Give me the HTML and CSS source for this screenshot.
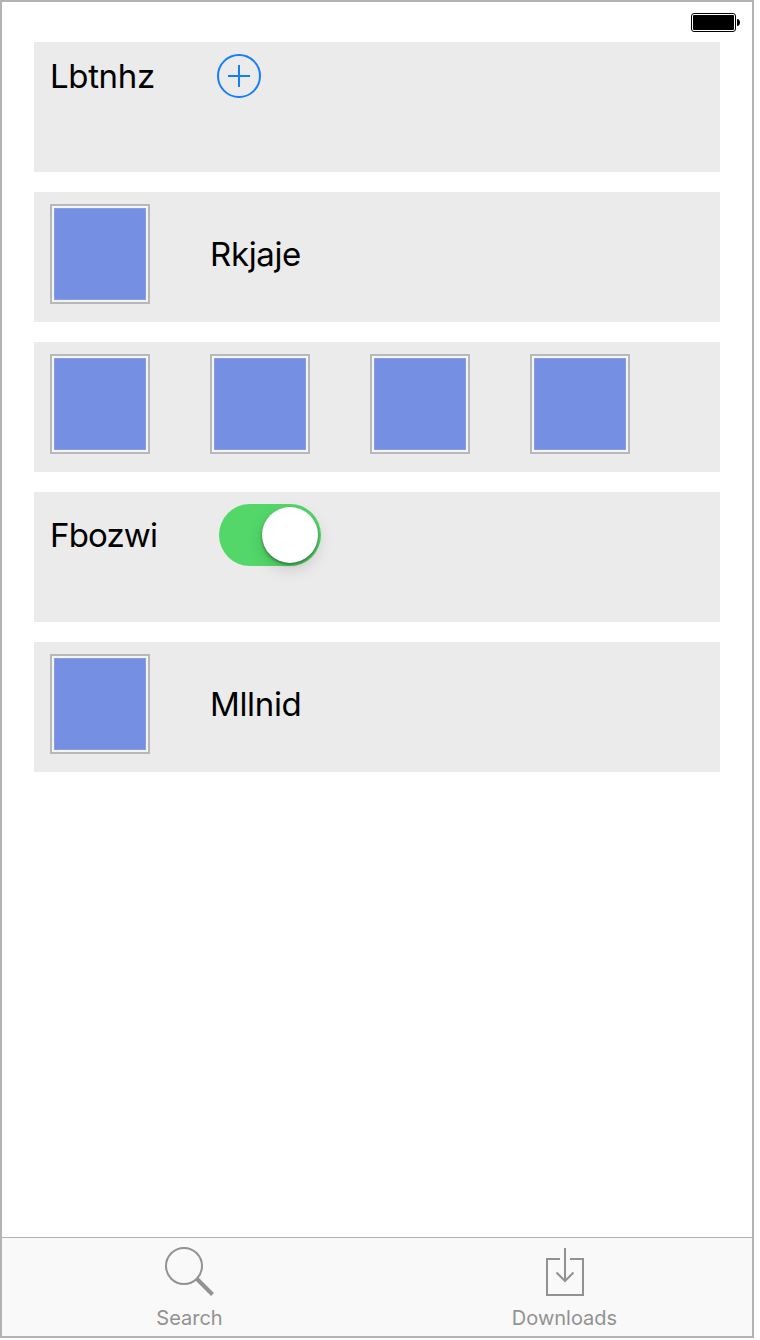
FILE: index.html
```html
<!DOCTYPE html>
<html lang="en">
<head>
<meta charset="utf-8">
<title>Settings</title>
<link rel="stylesheet" href="styles.css">
</head>
<body>
<div class="screen">
  <header class="status-bar">
    <svg class="battery" width="50" height="20" viewBox="0 0 50 20">
      <rect x=".5" y=".5" width="44" height="18" rx="2.5" fill="#fff" stroke="#000"/>
      <rect x="2" y="2" width="41" height="15" rx="1" fill="#000"/>
      <path d="M46 6c4 0 4 7 0 7z" fill="#000"/>
    </svg>
  </header>
  <main class="cards">
    <section class="card">
      <div class="row">
        <span class="label">Lbtnhz</span>
        <svg class="add" width="44" height="44" viewBox="0 0 44 44" fill="none" stroke="#147efb" stroke-width="2">
          <circle cx="22" cy="22" r="21"/>
          <path d="M11 22h22M22 11v22"/>
        </svg>
      </div>
    </section>
    <section class="card">
      <div class="row">
        <div class="swatch"></div>
        <span class="label">Rkjaje</span>
      </div>
    </section>
    <section class="card">
      <div class="row">
        <div class="swatch"></div>
        <div class="swatch"></div>
        <div class="swatch"></div>
        <div class="swatch"></div>
      </div>
    </section>
    <section class="card">
      <div class="row">
        <span class="label tight">Fbozwi</span>
        <div class="switch"><div class="knob"></div></div>
      </div>
    </section>
    <section class="card">
      <div class="row">
        <div class="swatch"></div>
        <span class="label">Mllnid</span>
      </div>
    </section>
  </main>
  <nav class="tab-bar">
    <div class="tab">
      <svg width="51" height="52" viewBox="0 0 51 52" fill="none" stroke="#929292">
        <circle cx="20" cy="20" r="18" stroke-width="2"/>
        <path d="M32.500 32.500L48.500 48.500" stroke-width="4"/>
      </svg>
      <span class="tab-label">Search</span>
    </div>
    <div class="tab">
      <svg width="51" height="52" viewBox="0 0 51 52" fill="none" stroke="#929292" stroke-width="2">
        <path d="M21 13H8V49H44V13H31M26 2V34M17.500 26.500L26 35L34.500 26.500"/>
      </svg>
      <span class="tab-label">Downloads</span>
    </div>
  </nav>
</div>
</body>
</html>
```
FILE: styles.css
```css
*, *::before { box-sizing: border-box; }
body {
  margin: 0;
  background: #fff;
  font-family: Inter, "Liberation Sans", sans-serif;
}
.screen {
  display: flex;
  flex-direction: column;
  width: 754px;
  height: 1338px;
  border: 2px solid #b3b3b3;
}
.status-bar {
  display: flex;
  justify-content: flex-end;
  height: 40px;
  padding: 11px 11px 0 0;
}
.battery { display: block; }
.cards {
  display: flex;
  flex: 1;
  flex-direction: column;
  gap: 20px;
  padding: 0 32px;
}
.card {
  height: 130px;
  padding: 12px 16px;
  background: #ebebeb;
}
.row {
  display: grid;
  grid-template-columns: repeat(4, 160px);
  align-items: center;
}
.label {
  font-size: 33px;
  line-height: 40px;
  letter-spacing: -.35px;
  color: #000;
  white-space: nowrap;
}
.tight { letter-spacing: -.85px; }
.add { display: block; margin-left: 7px; }
.swatch {
  width: 100px;
  height: 100px;
  padding: 2px;
  border: 2px solid #b8b8b8;
  background: #f3f5fb;
}
.swatch::before {
  display: block;
  height: 100%;
  border: 1px solid #899ee6;
  background: #758fe2;
  content: "";
}
.switch {
  display: flex;
  justify-content: flex-end;
  width: 102px;
  height: 62px;
  margin-left: 9px;
  padding: 3px;
  border-radius: 31px;
  background: #53d769;
}
.knob {
  width: 56px;
  height: 56px;
  border-radius: 50%;
  background: #fff;
  box-shadow: 0 2px 3px rgba(0, 0, 0, .35), 0 6px 16px rgba(0, 0, 0, .15);
}
.tab-bar {
  display: grid;
  grid-template-columns: 1fr 1fr;
  height: 99px;
  border-top: 1px solid #b2b2b2;
  background: #f9f9f9;
}
.tab {
  display: flex;
  flex-direction: column;
  align-items: center;
  padding-top: 8px;
}
.tab svg { display: block; }
.tab-label {
  margin-top: 8px;
  font-size: 20px;
  line-height: 24px;
  color: #929292;
}
```
